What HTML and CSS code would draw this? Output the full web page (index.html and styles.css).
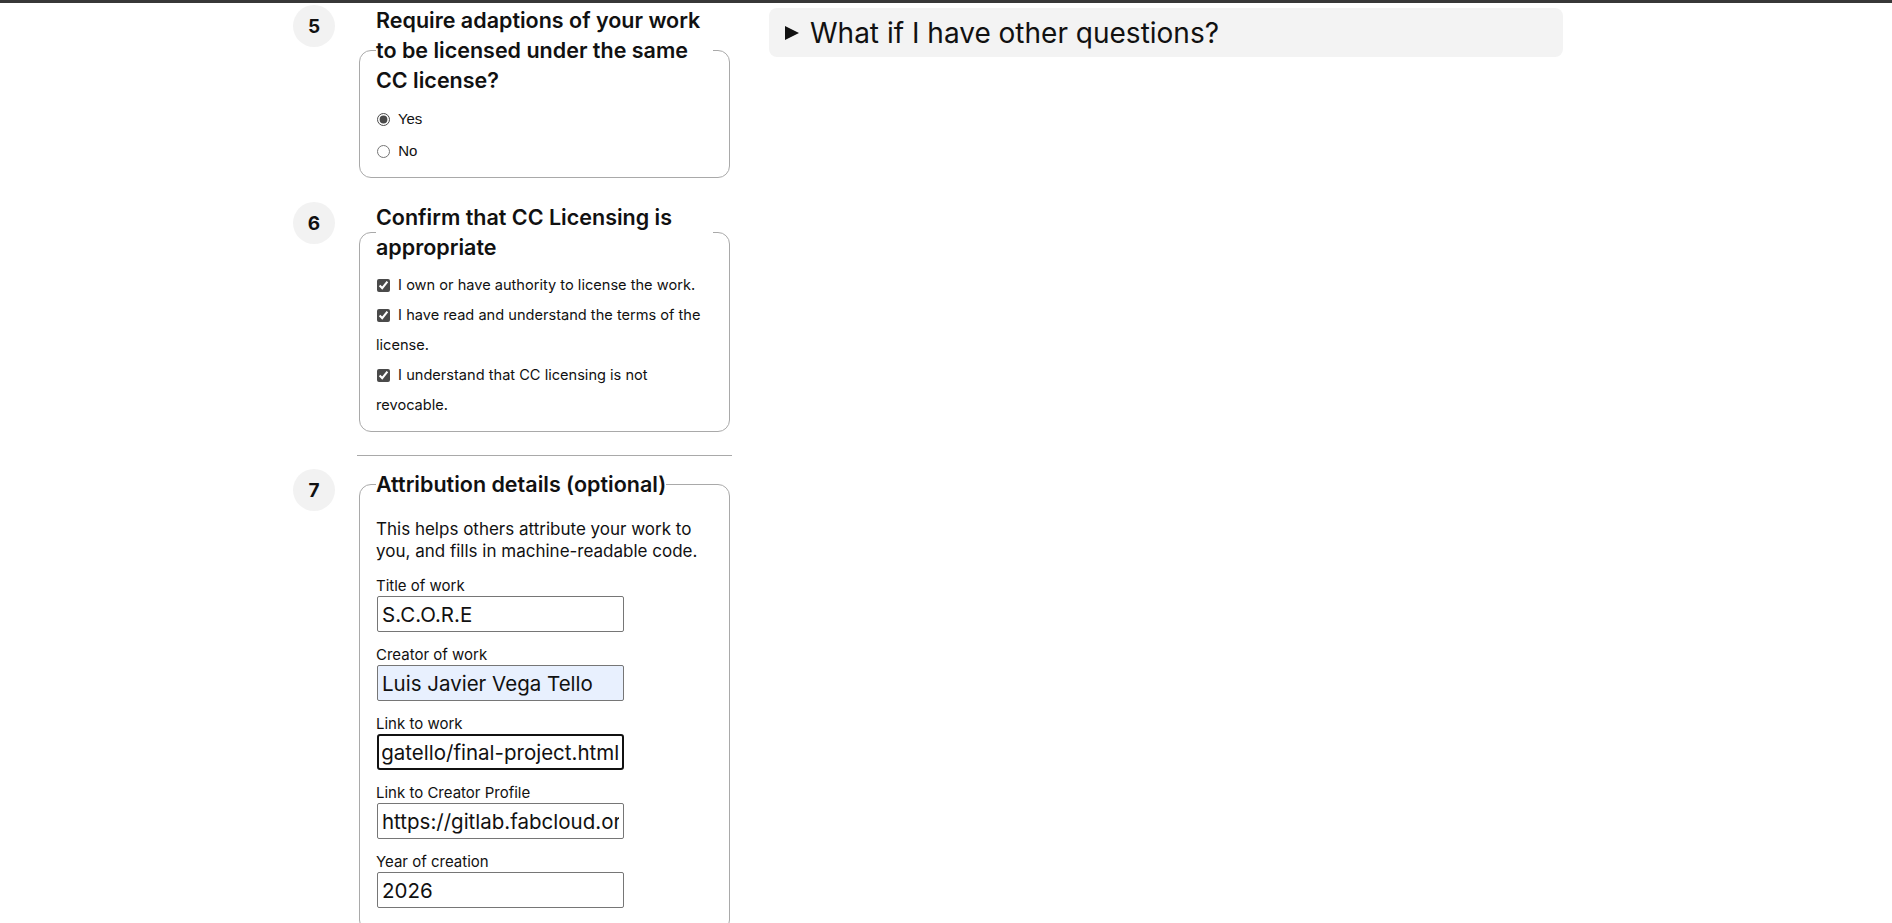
FILE: index.html
```html
<!DOCTYPE html>
<html lang="en">
<head>
    <meta charset="UTF-8">
    <meta name="viewport" content="width=device-width, initial-scale=1.0">
    <title>License chooser</title>
    <link rel="stylesheet" href="styles.css">
</head>
<body>
    <div class="topbar"></div>
    <main class="wrap">
        <div class="chooser">
            <section class="step step-sa">
                <span class="step-num">5</span>
                <fieldset class="step-box">
                    <legend>Require adaptions of your work to be licensed under the same CC license?</legend>
                    <div class="opts opts-radio">
                        <label class="opt opt-radio"><input type="radio" name="share-alike" checked> Yes</label>
                        <label class="opt opt-radio"><input type="radio" name="share-alike"> No</label>
                    </div>
                </fieldset>
            </section>

            <section class="step step-confirm">
                <span class="step-num">6</span>
                <fieldset class="step-box">
                    <legend>Confirm that CC Licensing is appropriate</legend>
                    <div class="opts">
                        <label class="opt"><input type="checkbox" checked> I own or have authority to license the work.</label>
                        <label class="opt"><input type="checkbox" checked> I have read and understand the terms of the license.</label>
                        <label class="opt"><input type="checkbox" checked> I understand that CC licensing is not revocable.</label>
                    </div>
                </fieldset>
            </section>

            <hr class="divider">

            <section class="step step-attr">
                <span class="step-num">7</span>
                <fieldset class="step-box">
                    <legend>Attribution details (optional)</legend>
                    <p class="step-note">This helps others attribute your work to you, and fills in machine-readable code.</p>

                    <label class="field-label" for="work-title">Title of work</label>
                    <input class="field-input" type="text" id="work-title" value="S.C.O.R.E">

                    <label class="field-label" for="work-creator">Creator of work</label>
                    <input class="field-input autofilled" type="text" id="work-creator" value="Luis Javier Vega Tello">

                    <label class="field-label" for="work-link">Link to work</label>
                    <input class="field-input" type="text" id="work-link" value="https://fabacademy.org/2025/labs/students/luis-vegatello/final-project.html">

                    <label class="field-label" for="creator-profile">Link to Creator Profile</label>
                    <input class="field-input" type="text" id="creator-profile" value="https://gitlab.fabcloud.org/luisvegatello">

                    <label class="field-label" for="work-year">Year of creation</label>
                    <input class="field-input" type="text" id="work-year" value="2026">
                </fieldset>
            </section>
        </div>

        <aside class="faq">
            <details class="faq-item">
                <summary>What if I have other questions?</summary>
                <p>Get in touch with the community.</p>
            </details>
        </aside>
    </main>

    <script>
        // keep the cursor at the end of the link field
        const link = document.getElementById('work-link');
        link.focus();
        link.setSelectionRange(link.value.length, link.value.length);
        link.scrollLeft = link.scrollWidth;
    </script>
</body>
</html>
```

FILE: styles.css
```css
body { margin: 0; font-family: Inter, "Noto Sans", sans-serif; color: #111; background: #fff; }
.topbar { height: 3px; background: #383838; }
.wrap { width: 1306px; margin: 0 auto; padding-top: 2px; display: grid; grid-template-columns: 439px 794px; column-gap: 37px; align-items: start; }

/* steps */
.step { display: flex; gap: 22px; align-items: flex-start; }
.step-sa { margin-bottom: 24px; }
.step-num { flex: none; width: 42px; height: 42px; border-radius: 50%; background: #f2f2f2; display: flex; align-items: center; justify-content: center; font-size: 19px; font-weight: 700; }
.step-box { flex: 1; min-width: 0; margin: 0 2px; padding: 0 16px 11px; border: 1px solid #a9a9a9; border-radius: 12px; }
.step-box legend { padding: 0; font-size: 21.5px; font-weight: 600; line-height: 30px; }

.opts { padding-top: 8px; }
.opts-radio { padding-top: 9px; }
.opt { display: block; font-size: 14.6px; line-height: 30px; }
.opt-radio { font-family: "Liberation Sans", Arial, sans-serif; font-size: 15px; }
.opt-radio + .opt-radio { margin-top: 2px; }
.opt input { margin: 0 4px 0 1px; vertical-align: -2px; accent-color: #4a4a4a; }

.divider { border: 0; border-top: 1px solid #a9a9a9; margin: 23px 0 13px 64px; }

/* attribution form */
.step-note { margin: 19px 0 13px; font-size: 17px; line-height: 22px; }
.field-label { display: block; font-size: 15px; line-height: 21px; }
.field-input { display: block; box-sizing: border-box; width: 247px; height: 36px; margin: 0 0 12px 1px; padding: 0 4px; border: 1px solid #767676; border-radius: 2px; font: 400 20.5px Inter, "Noto Sans", sans-serif; color: #111; background: #fff; }
.field-input:focus { outline: none; border: 2px solid #111; border-radius: 3px; padding: 0 3px; }
.field-input.autofilled { background: #e8f0fe; }

/* faq */
.faq { margin-top: 3px; }
.faq-item { background: #f3f3f3; border-radius: 8px; }
.faq-item summary { display: flex; align-items: center; gap: 11px; height: 49px; padding: 0 16px; font-size: 28px; list-style: none; cursor: pointer; }
.faq-item summary::-webkit-details-marker { display: none; }
.faq-item summary::before { content: ""; border-left: 14px solid #111; border-top: 7px solid transparent; border-bottom: 7px solid transparent; }
.faq-item p { margin: 0; padding: 0 16px 16px; }
```
